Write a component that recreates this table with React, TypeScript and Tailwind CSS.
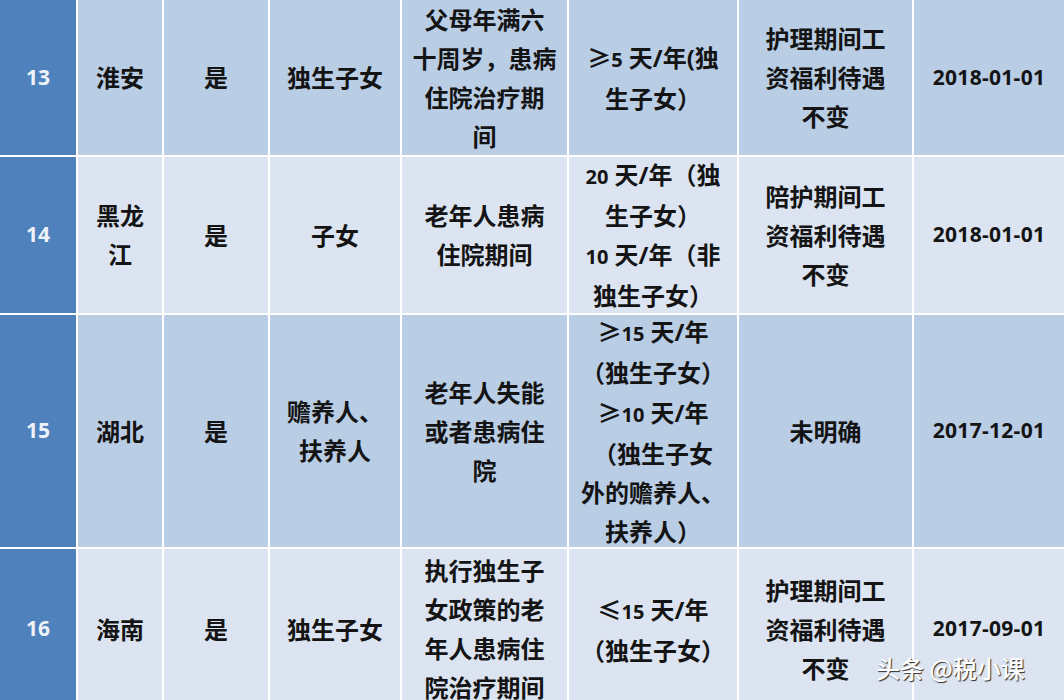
import React from "react";

const N = ({ children }: { children: React.ReactNode }) => (
  <span className="text-[20px] font-['Open_Sans',sans-serif]">{children}</span>
);

const G = ({ children }: { children: React.ReactNode }) => (
  <span className="font-['Noto_Sans_CJK_SC',sans-serif]">{children}</span>
);

type Row = {
  no: string;
  h: string;
  bg: string;
  cells: React.ReactNode[][];
  date: string;
};

const rows: Row[] = [
  {
    no: "13",
    h: "h-[155px]",
    bg: "bg-[#b9cde5]",
    cells: [
      ["淮安"],
      ["是"],
      ["独生子女"],
      ["父母年满六", "十周岁，患病", "住院治疗期", "间"],
      [<><G>≥</G><N>5</N> 天/年(独</>, "生子女）"],
      ["护理期间工", "资福利待遇", "不变"],
    ],
    date: "2018-01-01",
  },
  {
    no: "14",
    h: "h-[156px]",
    bg: "bg-[#dbe4f0]",
    cells: [
      ["黑龙", "江"],
      ["是"],
      ["子女"],
      ["老年人患病", "住院期间"],
      [<><N>20</N> 天/年（独</>, "生子女）", <><N>10</N> 天/年（非</>, "独生子女）"],
      ["陪护期间工", "资福利待遇", "不变"],
    ],
    date: "2018-01-01",
  },
  {
    no: "15",
    h: "h-[232px]",
    bg: "bg-[#b9cde5]",
    cells: [
      ["湖北"],
      ["是"],
      ["赡养人、", "扶养人"],
      ["老年人失能", "或者患病住", "院"],
      [
        <><G>≥</G><N>15</N> 天/年</>,
        "（独生子女）",
        <><G>≥</G><N>10</N> 天/年</>,
        "（独生子女",
        "外的赡养人、",
        "扶养人）",
      ],
      ["未明确"],
    ],
    date: "2017-12-01",
  },
  {
    no: "16",
    h: "h-[160px]",
    bg: "bg-[#dbe4f0]",
    cells: [
      ["海南"],
      ["是"],
      ["独生子女"],
      ["执行独生子", "女政策的老", "年人患病住", "院治疗期间"],
      [<><G>≤</G><N>15</N> 天/年</>, "（独生子女）"],
      ["护理期间工", "资福利待遇", "不变"],
    ],
    date: "2017-09-01",
  },
];

export default function App() {
  return (
    <div className="relative w-[1064px] h-[700px] overflow-hidden bg-white font-['Open_Sans','Noto_Sans_CJK_SC',sans-serif]">
      <div className="grid grid-cols-[76px_84px_104px_130px_165px_168px_173px_150px] gap-[2px] bg-white">
        {rows.map((r) => (
          <React.Fragment key={r.no}>
            <div
              className={`${r.h} bg-[#4f81bd] flex items-center justify-center text-[21px] font-bold text-[#eef3fa]`}
            >
              {r.no}
            </div>
            {r.cells.map((lines, i) => (
              <div
                key={i}
                className={`${r.h} ${r.bg} flex flex-col items-center justify-center text-[24px] leading-[39px] font-bold text-[#141414] whitespace-nowrap`}
              >
                {lines.map((l, j) => (
                  <div key={j}>{l}</div>
                ))}
              </div>
            ))}
            <div
              className={`${r.h} ${r.bg} flex items-center justify-center text-[21px] tracking-[0.3px] font-bold text-[#141414]`}
            >
              {r.date}
            </div>
          </React.Fragment>
        ))}
      </div>
      <div className="absolute left-[876px] top-[652px] text-[24px] font-medium text-white leading-[32px] whitespace-nowrap font-['Noto_Sans_CJK_SC',sans-serif] [text-shadow:1px_1px_1px_rgba(0,0,0,0.8)]">
        头条 @税小课
      </div>
    </div>
  );
}
